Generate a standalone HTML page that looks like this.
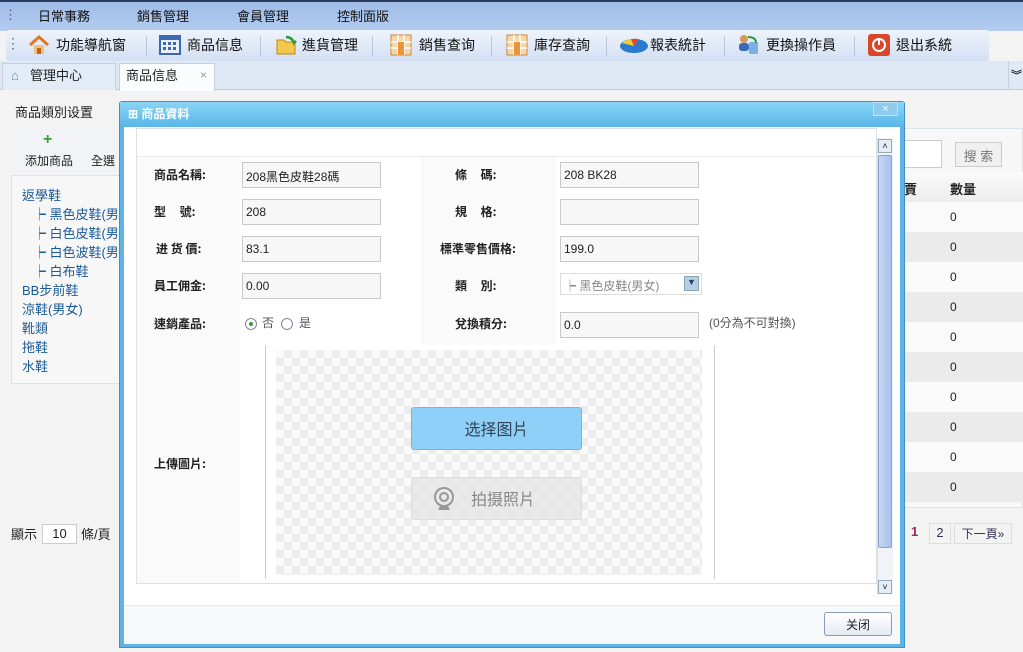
<!DOCTYPE html>
<html><head><meta charset="utf-8"><style>
*{margin:0;padding:0;box-sizing:border-box}
body{width:1023px;height:652px;overflow:hidden;position:relative;background:#f3f3f3;font-family:"Liberation Sans","Noto Sans CJK TC",sans-serif;font-size:13px;color:#222}
.a{position:absolute}
.menu{left:0;top:0;width:1023px;height:31px;background:linear-gradient(#9fbce8,#b3ccf0);border-top:2px solid #2a3a5a}
.menu span{position:absolute;top:6px;font-size:13px;color:#111;line-height:17px}
.tb{left:6px;top:30px;width:983px;height:31px;background:linear-gradient(#eef3fb,#d3e0f3);border-radius:3px}
.tb span{position:absolute;top:6px;font-size:14px;color:#111;line-height:19px}
.sep{position:absolute;top:6px;width:1px;height:20px;background:#b8c6dc}
.ic{position:absolute;top:4px;width:22px;height:22px}
.tabs{left:0;top:61px;width:1023px;height:29px;background:#dfe8f5;border-bottom:1px solid #c0cde0}
.inp{position:absolute;height:26px;border:1px solid #c9c9c9;background:#f7f7f7;font-size:12px;padding:5px 0 0 3px;color:#222}
.lb{position:absolute;font-size:12px;font-weight:bold;color:#222;font-family:"Noto Sans CJK TC",sans-serif}
</style></head><body>
<div class="a menu">
<span style="left:4px;top:4px;color:#556">⋮</span>
<span style="left:38px">日常事務</span><span style="left:137px">銷售管理</span><span style="left:237px">會員管理</span><span style="left:337px">控制面版</span>
</div>
<div class="a tb">
<span style="left:0;top:4px;color:#667">⋮</span>
<svg class="ic" style="left:22px" viewBox="0 0 22 22"><path d="M2 11 L11 3 L20 11" stroke="#e07a20" stroke-width="3" fill="none"/><rect x="6" y="11" width="10" height="9" fill="#f3c27a"/><rect x="9" y="14" width="4" height="6" fill="#c0621a"/></svg>
<span style="left:50px">功能導航窗</span><div class="sep" style="left:140px"></div>
<svg class="ic" style="left:153px" viewBox="0 0 22 22"><rect x="1" y="2" width="20" height="18" fill="#e8f0fb" stroke="#3c68b0" stroke-width="2"/><rect x="1" y="2" width="20" height="4" fill="#3c68b0"/><g fill="#3c68b0"><rect x="4" y="8" width="3" height="3"/><rect x="9" y="8" width="3" height="3"/><rect x="14" y="8" width="3" height="3"/><rect x="4" y="13" width="3" height="3"/><rect x="9" y="13" width="3" height="3"/><rect x="14" y="13" width="3" height="3"/></g></svg>
<span style="left:181px">商品信息</span><div class="sep" style="left:254px"></div>
<svg class="ic" style="left:270px" viewBox="0 0 22 22"><path d="M1 6h7l2 2h9v12H1z" fill="#f2c94c" stroke="#b88a1c"/><path d="M10 3 q6 0 8 6 l2-2" stroke="#2e9a3a" stroke-width="2.5" fill="none"/></svg>
<span style="left:296px">進貨管理</span><div class="sep" style="left:366px"></div>
<svg class="ic" style="left:384px" viewBox="0 0 22 22"><rect x="1" y="1" width="20" height="20" fill="#f7d7a8" stroke="#c98a3a"/><path d="M8 1v20M14 1v20M1 8h20M1 14h20" stroke="#fff" stroke-width="1.5"/><rect x="8" y="8" width="6" height="13" fill="#e9963a"/></svg>
<span style="left:413px">銷售查询</span><div class="sep" style="left:485px"></div>
<svg class="ic" style="left:500px" viewBox="0 0 22 22"><rect x="1" y="1" width="20" height="20" fill="#f7d7a8" stroke="#c98a3a"/><path d="M8 1v20M14 1v20M1 8h20M1 14h20" stroke="#fff" stroke-width="1.5"/><rect x="8" y="8" width="6" height="13" fill="#e9963a"/></svg>
<span style="left:528px">庫存查詢</span><div class="sep" style="left:600px"></div>
<svg class="ic" style="left:613px;width:30px" viewBox="0 0 30 22"><ellipse cx="15" cy="12" rx="14" ry="7" fill="#2a7bd0"/><path d="M15 12 L3 9 A14 7 0 0 1 12 5z" fill="#f0d030"/><path d="M15 12 L12 5 A14 7 0 0 1 20 5z" fill="#e04a30"/></svg>
<span style="left:644px">報表統計</span><div class="sep" style="left:718px"></div>
<svg class="ic" style="left:732px" viewBox="0 0 22 22"><circle cx="6" cy="5" r="4" fill="#d89a5a"/><rect x="1" y="9" width="10" height="8" rx="3" fill="#3a6ab8"/><rect x="11" y="8" width="9" height="12" rx="2" fill="#7ab0e8"/><path d="M10 3q8 0 8 6" stroke="#2e9a3a" stroke-width="2" fill="none"/></svg>
<span style="left:760px">更換操作員</span><div class="sep" style="left:848px"></div>
<svg class="ic" style="left:862px" viewBox="0 0 22 22"><rect x="0" y="0" width="22" height="22" rx="3" fill="#d9472a"/><circle cx="11" cy="11" r="6" fill="none" stroke="#fff" stroke-width="2"/><path d="M11 4v7" stroke="#fff" stroke-width="2"/></svg>
<span style="left:890px">退出系統</span>
</div>
<div class="a tabs">
<div class="a" style="left:2px;top:2px;width:114px;height:27px;background:#e3ebf6;border:1px solid #c4d0e2;border-bottom:none"><span style="position:absolute;left:8px;top:3px;color:#4a90d0;line-height:17px">⌂</span><span style="position:absolute;left:27px;top:3px;line-height:17px">管理中心</span></div>
<div class="a" style="left:119px;top:2px;width:96px;height:28px;background:#fbfcfe;border:1px solid #c4d0e2;border-bottom:none"><span style="position:absolute;left:6px;top:3px;line-height:17px">商品信息</span><span style="position:absolute;left:80px;top:3px;color:#999;font-size:12px;line-height:17px">×</span></div>
<div class="a" style="left:1008px;top:0;width:15px;height:28px;border-left:1px solid #c4d0e2;font-size:11px;padding:6px 0 0 2px;font-weight:bold">︾</div>
</div>
<!-- left panel -->
<div class="a" style="left:15px;top:102px">商品類別设置</div>
<div class="a" style="left:11px;top:128px;width:110px;height:256px;border:1px solid #dde3ea;background:#f7f7f7"></div>
<div class="a" style="left:11px;top:128px;width:110px;height:48px;background:#f1f3f6;border-bottom:1px solid #dde3ea"></div>
<div class="a" style="left:43px;top:131px;color:#3aa03a;font-weight:bold;font-size:16px">+</div>
<div class="a" style="left:25px;top:152px;font-size:12px">添加商品</div>
<div class="a" style="left:91px;top:152px;font-size:12px">全選</div>
<div class="a" style="left:22px;top:186px;line-height:19px;color:#1a5a9a;font-size:13px;white-space:nowrap">返學鞋<br>&nbsp;&nbsp;&nbsp;┝ 黑色皮鞋(男<br>&nbsp;&nbsp;&nbsp;┝ 白色皮鞋(男<br>&nbsp;&nbsp;&nbsp;┝ 白色波鞋(男<br>&nbsp;&nbsp;&nbsp;┝ 白布鞋<br>BB步前鞋<br>涼鞋(男女)<br>靴類<br>拖鞋<br>水鞋</div>
<div class="a" style="left:11px;top:524px">顯示</div>
<div class="a" style="left:42px;top:524px;width:35px;height:20px;border:1px solid #ccc;background:#fff;text-align:center;padding-top:1px">10</div>
<div class="a" style="left:81px;top:524px">條/頁</div>
<!-- right background table -->
<div class="a" style="left:900px;top:128px;width:123px;height:380px;border:1px solid #dde3ea;background:#f7f7f7"></div>
<div class="a" style="left:895px;top:140px;width:47px;height:28px;border:1px solid #ccc;background:#fff"></div>
<div class="a" style="left:955px;top:142px;width:47px;height:25px;border:1px solid #ccc;background:#f0f0f0;color:#777;text-align:center;padding-top:3px">搜 索</div>
<div class="a" style="left:900px;top:172px;width:123px;height:30px;background:linear-gradient(#fafafa,#ececec)"></div>
<div class="a" style="left:904px;top:179px;font-weight:bold">賈</div>
<div class="a" style="left:950px;top:179px;font-weight:bold">數量</div>
<div class="a" style="left:900px;top:202px;width:123px;height:300px;background:repeating-linear-gradient(#fafafa 0 30px,#ebebeb 30px 60px)"></div>
<div class="a" style="left:950px;top:202px;line-height:30px;font-size:12px">0<br>0<br>0<br>0<br>0<br>0<br>0<br>0<br>0<br>0</div>
<div class="a" style="left:911px;top:524px;color:#a0285a;font-weight:bold">1</div>
<div class="a" style="left:929px;top:523px;width:22px;height:21px;border:1px solid #ddd;text-align:center;padding-top:1px;color:#335">2</div>
<div class="a" style="left:954px;top:523px;width:58px;height:21px;border:1px solid #ddd;text-align:center;padding-top:1px;font-size:12px;color:#335">下一頁»</div>
<!-- dialog -->
<div class="a" style="left:119px;top:101px;width:786px;height:547px;background:#5eb4e4;border:1px solid #4090c8;border-radius:3px 3px 0 0"></div>
<div class="a" style="left:120px;top:102px;width:784px;height:24px;background:linear-gradient(#8ad4f6,#5ab8e8)"></div>
<div class="a" style="left:128px;top:105px;color:#fff;font-size:12px;font-weight:bold">⊞ 商品資料</div>
<div class="a" style="left:873px;top:102px;width:25px;height:14px;background:#8ecbee;border:1px solid #bfe0f5;color:#fff;font-size:11px;text-align:center;line-height:12px">×</div>
<div class="a" style="left:124px;top:127px;width:776px;height:517px;background:#fff"></div>
<div class="a" style="left:124px;top:605px;width:776px;height:39px;background:#f7f8fa;border-top:1px solid #e4e8ee"></div>
<div class="a" style="left:824px;top:612px;width:68px;height:24px;border:1px solid #8a9ab0;border-radius:3px;background:linear-gradient(#fff,#e4ebf3);text-align:center;padding-top:3px;font-size:12px">关闭</div>
<div class="a" style="left:136px;top:128px;width:741px;height:456px;border:1px solid #e0e0e0;background:#fff"></div>
<div class="a" style="left:137px;top:156px;width:740px;height:1px;background:#e8e8e8"></div>
<!-- scrollbar -->
<div class="a" style="left:877px;top:138px;width:16px;height:456px;background:#f0f3f8;border-left:1px solid #dde"></div>
<div class="a" style="left:878px;top:139px;width:14px;height:14px;border:1px solid #9ab;background:#e4ecf6;font-size:9px;text-align:center;line-height:12px">˄</div>
<div class="a" style="left:878px;top:155px;width:14px;height:393px;background:linear-gradient(90deg,#c4d6f2,#a8c0ec);border:1px solid #8aa4cc;border-radius:2px"></div>
<div class="a" style="left:878px;top:580px;width:14px;height:14px;border:1px solid #9ab;background:#e4ecf6;font-size:9px;text-align:center;line-height:12px">˅</div>
<!-- label columns -->
<div class="a" style="left:137px;top:157px;width:103px;height:426px;background:#fafafa"></div>
<div class="a" style="left:421px;top:157px;width:135px;height:188px;background:#fafafa"></div>
<div class="lb" style="left:154px;top:166px">商品名稱:</div>
<div class="lb" style="left:154px;top:203px">型&nbsp;&nbsp;&nbsp;&nbsp;&nbsp;號:</div>
<div class="lb" style="left:156px;top:240px">进 货 價:</div>
<div class="lb" style="left:154px;top:277px">員工佣金:</div>
<div class="lb" style="left:154px;top:315px">速銷產品:</div>
<div class="lb" style="left:154px;top:455px">上傳圖片:</div>
<div class="lb" style="left:455px;top:166px">條&nbsp;&nbsp;&nbsp;&nbsp;&nbsp;碼:</div>
<div class="lb" style="left:455px;top:203px">規&nbsp;&nbsp;&nbsp;&nbsp;&nbsp;格:</div>
<div class="lb" style="left:440px;top:240px">標準零售價格:</div>
<div class="lb" style="left:455px;top:277px">類&nbsp;&nbsp;&nbsp;&nbsp;&nbsp;別:</div>
<div class="lb" style="left:455px;top:315px">兌換積分:</div>
<div class="inp" style="left:242px;top:162px;width:139px">208黑色皮鞋28碼</div>
<div class="inp" style="left:242px;top:199px;width:139px">208</div>
<div class="inp" style="left:242px;top:236px;width:139px">83.1</div>
<div class="inp" style="left:242px;top:273px;width:139px">0.00</div>
<div class="a" style="left:245px;top:318px;width:12px;height:12px;border:1px solid #7a8a9a;border-radius:50%;background:#fff"><div style="margin:3px;width:4px;height:4px;border-radius:50%;background:#3a9a3a"></div></div>
<div class="a" style="left:262px;top:314px;font-size:12px;color:#555">否</div>
<div class="a" style="left:281px;top:318px;width:12px;height:12px;border:1px solid #7a8a9a;border-radius:50%;background:#fff"></div>
<div class="a" style="left:299px;top:314px;font-size:12px;color:#555">是</div>
<div class="inp" style="left:560px;top:162px;width:139px">208 BK28</div>
<div class="inp" style="left:560px;top:199px;width:139px"></div>
<div class="inp" style="left:560px;top:236px;width:139px">199.0</div>
<div class="a" style="left:560px;top:273px;width:142px;height:22px;border:1px solid #ddd;background:#fff;font-size:12px;color:#888;padding:3px 0 0 3px">┝ 黑色皮鞋(男女)</div>
<div class="a" style="left:684px;top:276px;width:15px;height:15px;background:#b8cce8;border:1px solid #8aa;font-size:9px;text-align:center;color:#246">▼</div>
<div class="inp" style="left:560px;top:312px;width:139px">0.0</div>
<div class="a" style="left:709px;top:314px;font-size:12px;color:#555">(0分為不可對換)</div>
<!-- upload -->
<div class="a" style="left:265px;top:345px;width:450px;height:234px;border-left:1px solid #ccc;border-right:1px solid #ccc"></div>
<div class="a" style="left:276px;top:350px;width:426px;height:225px;background-color:#fafafa;background-image:linear-gradient(45deg,#ececec 25%,transparent 25%,transparent 75%,#ececec 75%),linear-gradient(45deg,#ececec 25%,transparent 25%,transparent 75%,#ececec 75%);background-size:16px 16px;background-position:0 0,8px 8px"></div>
<div class="a" style="left:411px;top:407px;width:171px;height:43px;background:#8fd0f8;border:1px solid #9ab;border-radius:3px;text-align:center;padding-top:8px;font-size:16px;color:#345">选择图片</div>
<div class="a" style="left:411px;top:477px;width:171px;height:43px;background:rgba(230,230,230,.85);border:1px solid #ddd;border-radius:3px;font-size:16px;color:#888;padding:8px 0 0 59px">拍摄照片</div>
<svg class="a" style="left:431px;top:486px" width="26" height="26" viewBox="0 0 26 26"><circle cx="13" cy="11" r="9" fill="none" stroke="#999" stroke-width="2"/><circle cx="13" cy="11" r="4" fill="none" stroke="#999" stroke-width="2"/><path d="M7 24h12l-2-4H9z" fill="#999"/></svg>
</body></html>
